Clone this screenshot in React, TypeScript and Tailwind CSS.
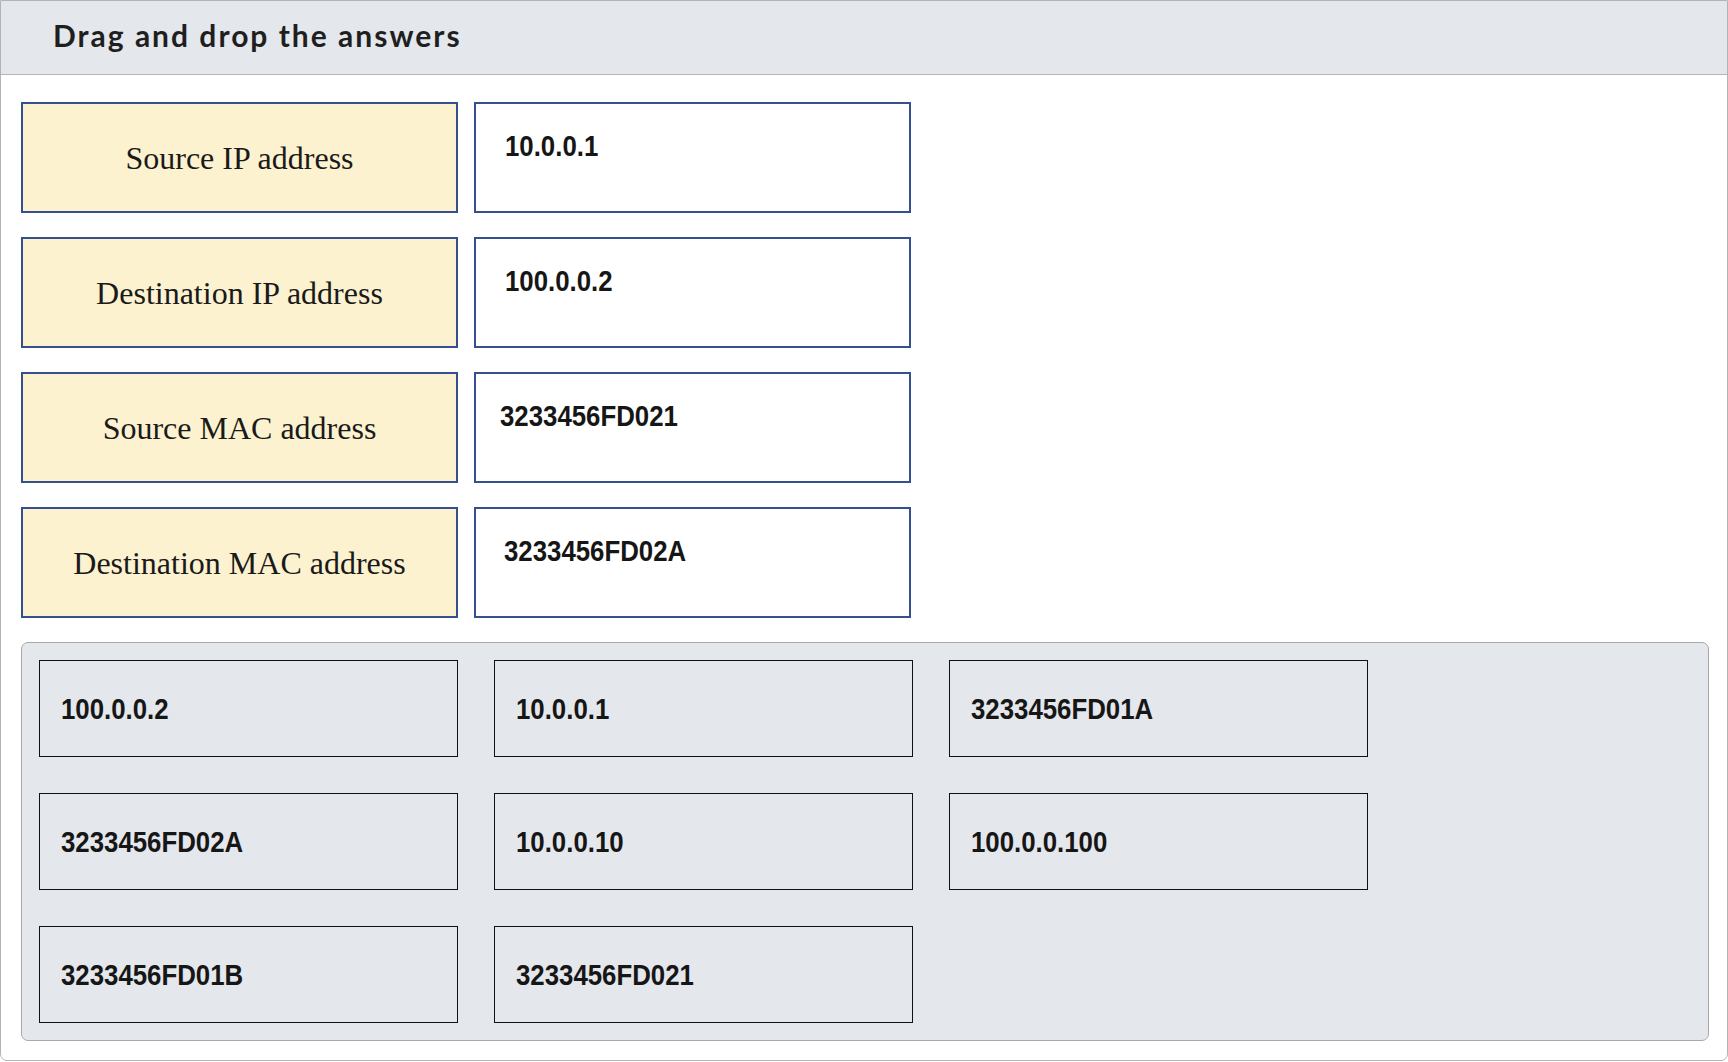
import React from "react";

const rows = [
  { label: "Source IP address", value: "10.0.0.1", pl: "pl-[29px]" },
  { label: "Destination IP address", value: "100.0.0.2", pl: "pl-[29px]" },
  { label: "Source MAC address", value: "3233456FD021", pl: "pl-[24px]" },
  { label: "Destination MAC address", value: "3233456FD02A", pl: "pl-[28px]" },
];

const answers = [
  "100.0.0.2",
  "10.0.0.1",
  "3233456FD01A",
  "3233456FD02A",
  "10.0.0.10",
  "100.0.0.100",
  "3233456FD01B",
  "3233456FD021",
];

function Narrow({ children }: { children: React.ReactNode }) {
  return (
    <span className="inline-block origin-left scale-x-[0.86] whitespace-nowrap font-['Liberation_Sans',Arial,sans-serif] text-[30px] font-bold leading-[30px] text-[#161616]">
      {children}
    </span>
  );
}

export default function App() {
  return (
    <div className="h-[1062px] w-full overflow-hidden bg-white">
      <div className="flex h-[1061px] flex-col overflow-hidden rounded-b-[7px] border border-[#b4b4b4] bg-white">
        <header className="flex h-[74px] shrink-0 items-center border-b border-[#b4b4b4] bg-[#e4e7ec] pb-[5px] pl-[52px]">
          <h1 className="font-['Lato',sans-serif] text-[30px] font-bold tracking-[2px] text-[#1f1f1f]">
            Drag and drop the answers
          </h1>
        </header>

        <div className="flex flex-col gap-[24px] pl-[20px] pt-[27px]">
          {rows.map((r) => (
            <div key={r.label} className="flex gap-[16px]">
              <div className="flex h-[111px] w-[437px] items-center justify-center border-2 border-[#34508f] bg-[#fcf2d0]">
                <span className="font-['Liberation_Serif','Times_New_Roman',serif] text-[32px] leading-none text-[#1a1a1a]">
                  {r.label}
                </span>
              </div>
              <div className={`h-[111px] w-[437px] border-2 border-[#34508f] bg-white pt-[27px] ${r.pl}`}>
                <Narrow>{r.value}</Narrow>
              </div>
            </div>
          ))}
        </div>

        <div className="mb-[19px] ml-[20px] mr-[18px] mt-[24px] grid flex-1 grid-cols-[repeat(3,419px)] content-start gap-x-[36px] gap-y-[36px] rounded-[7px] border border-[#a8a8a8] bg-[#e4e7ec] pl-[17px] pt-[17px]">
          {answers.map((a) => (
            <div
              key={a}
              className="flex h-[97px] items-center border border-[#111] bg-[#e4e7ec] pl-[21px]"
            >
              <Narrow>{a}</Narrow>
            </div>
          ))}
        </div>
      </div>
    </div>
  );
}
